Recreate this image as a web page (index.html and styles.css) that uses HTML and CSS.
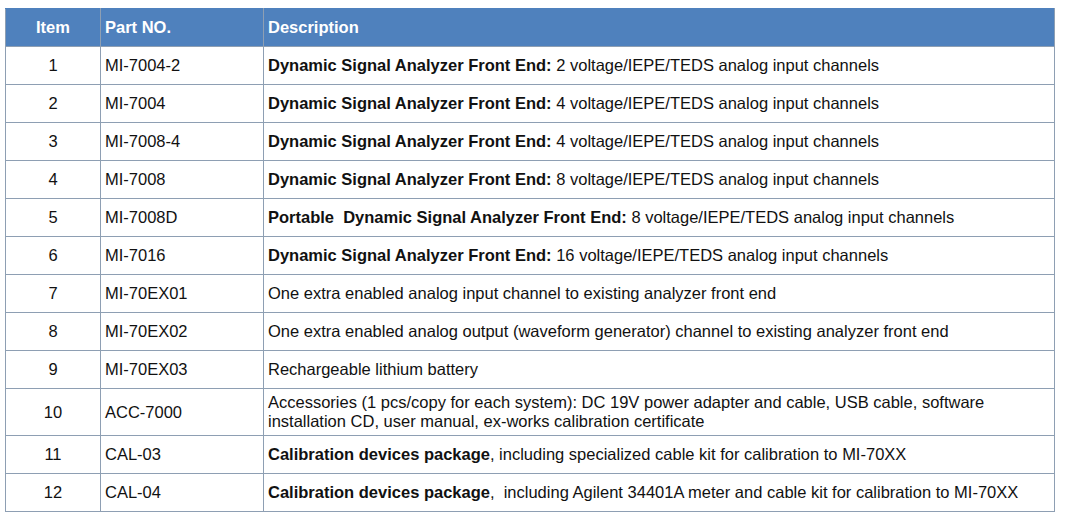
FILE: index.html
```html
<!DOCTYPE html>
<html>
<head>
<meta charset="utf-8">
<link rel="stylesheet" href="styles.css">
</head>
<body>
<table class="parts">
  <colgroup>
    <col class="c-item">
    <col class="c-part">
    <col class="c-desc">
  </colgroup>
  <thead>
    <tr><th class="item">Item</th><th>Part NO.</th><th>Description</th></tr>
  </thead>
  <tbody>
    <tr><td class="item">1</td><td>MI-7004-2</td><td><b>Dynamic Signal Analyzer Front End:</b> 2 voltage/IEPE/TEDS analog input channels</td></tr>
    <tr><td class="item">2</td><td>MI-7004</td><td><b>Dynamic Signal Analyzer Front End:</b> 4 voltage/IEPE/TEDS analog input channels</td></tr>
    <tr><td class="item">3</td><td>MI-7008-4</td><td><b>Dynamic Signal Analyzer Front End:</b> 4 voltage/IEPE/TEDS analog input channels</td></tr>
    <tr><td class="item">4</td><td>MI-7008</td><td><b>Dynamic Signal Analyzer Front End:</b> 8 voltage/IEPE/TEDS analog input channels</td></tr>
    <tr><td class="item">5</td><td>MI-7008D</td><td><b>Portable&nbsp; Dynamic Signal Analyzer Front End:</b> 8 voltage/IEPE/TEDS analog input channels</td></tr>
    <tr><td class="item">6</td><td>MI-7016</td><td><b>Dynamic Signal Analyzer Front End:</b> 16 voltage/IEPE/TEDS analog input channels</td></tr>
    <tr><td class="item">7</td><td>MI-70EX01</td><td>One extra enabled analog input channel to existing analyzer front end</td></tr>
    <tr><td class="item">8</td><td>MI-70EX02</td><td>One extra enabled analog output (waveform generator) channel to existing analyzer front end</td></tr>
    <tr><td class="item">9</td><td>MI-70EX03</td><td>Rechargeable lithium battery</td></tr>
    <tr class="tall"><td class="item">10</td><td>ACC-7000</td><td>Accessories (1 pcs/copy for each system): DC 19V power adapter and cable, USB cable, software<br>installation CD, user manual, ex-works calibration certificate</td></tr>
    <tr><td class="item">11</td><td>CAL-03</td><td><b>Calibration devices package</b>, including specialized cable kit for calibration to MI-70XX</td></tr>
    <tr><td class="item">12</td><td>CAL-04</td><td><b>Calibration devices package</b>,&nbsp; including Agilent 34401A meter and cable kit for calibration to MI-70XX</td></tr>
  </tbody>
</table>
</body>
</html>
```

FILE: styles.css
```css
html, body {
  margin: 0;
  background: #ffffff;
}
body {
  padding: 8px 0 0 5px;
  font-family: "Liberation Sans", Arial, sans-serif;
  font-size: 16.5px;
  color: #111111;
}
.parts {
  border-collapse: collapse;
  width: 1050px;
  table-layout: fixed;
}
.c-item { width: 95px; }
.c-part { width: 163px; }
.c-desc { width: auto; }
.parts th,
.parts td {
  border: 1px solid #8e9fb3;
  padding: 0 4px;
  height: 37px;
  text-align: left;
  vertical-align: middle;
  line-height: 19px;
  white-space: nowrap;
}
.parts th {
  background: #4f81bd;
  color: #ffffff;
  font-weight: bold;
  border-color: #4f81bd #8e9fb3 #8e9fb3 #8e9fb3;
}
.parts .item {
  text-align: center;
}
.parts tr.tall td {
  height: auto;
  padding-top: 4px;
  padding-bottom: 4px;
}
.parts b {
  font-weight: bold;
}
```
